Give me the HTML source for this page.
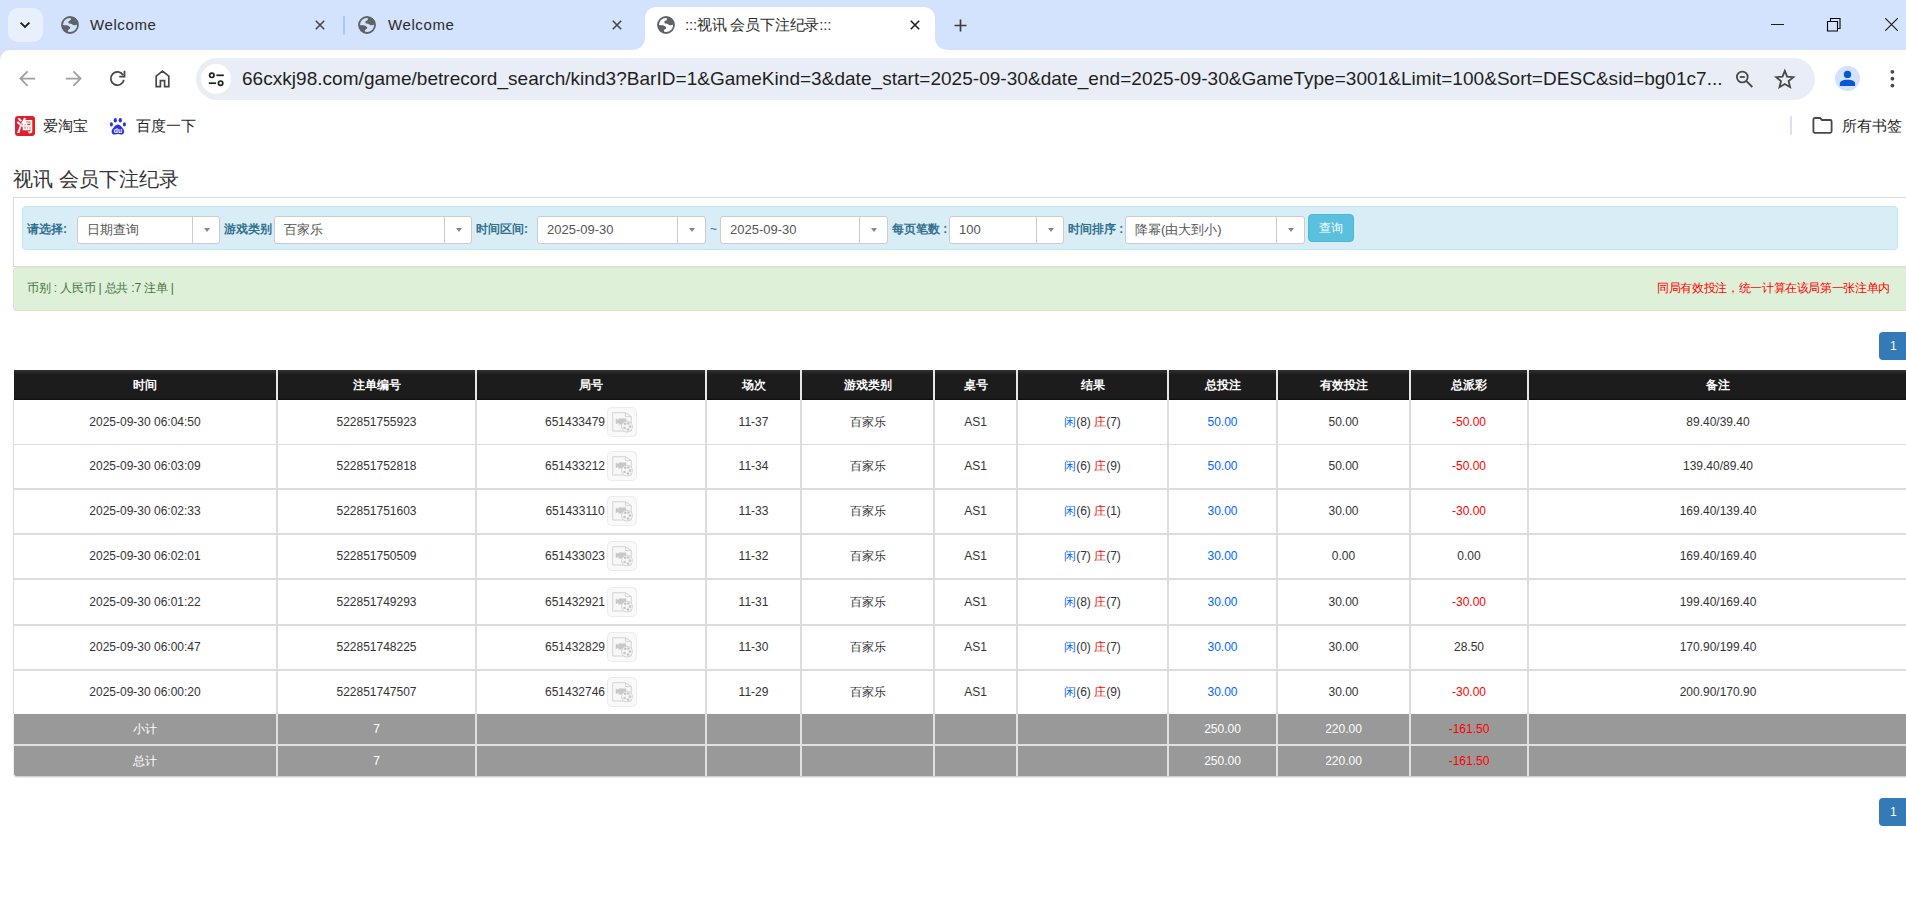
<!DOCTYPE html>
<html><head><meta charset="utf-8">
<style>
*{box-sizing:border-box}
html,body{margin:0;padding:0;width:1906px;height:900px;overflow:hidden;background:#fff;font-family:"Liberation Sans",sans-serif}
.abs{position:absolute}
/* chrome */
#tabstrip{position:absolute;left:0;top:0;width:1906px;height:62px;background:#d3e3fd}
#toolbar{position:absolute;left:0;top:50px;width:1906px;height:56px;background:#fff;border-top-left-radius:10px}
#bookbar{position:absolute;left:0;top:106px;width:1906px;height:40px;background:#fff}
.tabtitle{position:absolute;top:16px;font-size:15px;color:#2b2b2b;line-height:18px;white-space:nowrap}
#omni{position:absolute;left:196px;top:58px;width:1619px;height:42px;border-radius:21px;background:#e9eef6}
#url{position:absolute;left:242px;top:67px;font-size:19px;line-height:24px;color:#1f1f1f;white-space:nowrap;letter-spacing:0.034px}
.bk{top:117px;font-size:15px;line-height:18px;color:#1f1f1f;white-space:nowrap}
/* page */
#page{position:static}
.pg{left:1879px;width:40px;height:28px;border-radius:4px;background:#337ab7;color:#fff;font-size:12px;line-height:28px;padding-left:11px}
.sel{position:absolute;top:216px;height:28px;border:1px solid #ccc;border-radius:3px;background:#fff}
.st{position:absolute;left:9px;top:5px;font-size:13px;line-height:15px;color:#555;white-space:nowrap}
.sd{position:absolute;top:0;width:1px;height:26px;background:#ccc}
.sa{position:absolute;top:11px;width:0;height:0;border-left:3.5px solid transparent;border-right:3.5px solid transparent;border-top:4px solid #888}
.lbl{position:absolute;top:222px;font-size:12px;line-height:14px;font-weight:bold;color:#31708f;white-space:nowrap}
.btn{position:absolute;left:1308px;top:214px;width:46px;height:28px;border:1px solid #46b8da;border-radius:4px;background:#5bc0de;color:#fff;font-size:12px;line-height:26px;text-align:center}
.th{position:absolute;top:370px;height:30px;background:linear-gradient(#333 0,#222 3px,#1c1c1c 5px,#1c1c1c 28px,#0e0e0e 30px);color:#fff;font-weight:bold;font-size:12px;line-height:30px;text-align:center;white-space:nowrap}
.td{position:absolute;height:44px;font-size:12px;line-height:44px;color:#333;text-align:center;white-space:nowrap}
.tt{position:absolute;height:30px;font-size:12px;line-height:30px;color:#fff;text-align:center;white-space:nowrap}
.blue{color:#06f}.red{color:#f00}
.vid{display:inline-block;width:30px;height:30px;margin-left:2px;vertical-align:middle;line-height:0;position:relative;top:-1px}.vid svg{display:block}
</style></head><body>
<div id="tabstrip">
  <div class="abs" style="left:8px;top:8px;width:35px;height:34px;border-radius:10px;background:#e9f0fd"></div>
  <svg class="abs" style="left:19px;top:19px" width="12" height="12" viewBox="0 0 12 12"><path d="M1.6 3.6 L6 8 L10.4 3.6" fill="none" stroke="#1f1f1f" stroke-width="1.9"/></svg>
  <svg class="abs" style="left:61px;top:16px" width="18" height="18" viewBox="0 0 18 18"><circle cx="9" cy="9" r="8" fill="#d3e3fd" stroke="#5f6368" stroke-width="1.8"/><path d="M9.9 1 L9.8 3.9 C9.2 4.4 8 4.6 7.5 5.4 C7.1 6.3 7.4 7.3 8.3 7.6 C9.4 7.9 10.6 7.6 11.4 8.5 C12 9.1 12.6 9.4 13.3 9.3 C14.4 9.2 15.3 8.8 16.9 8.4 L17 5 L14 1.8 Z" fill="#5f6368"/><path d="M1 8.9 C2.5 9 4.5 9 5.6 9.3 C7 9.7 8.3 10.2 8.9 11 C9.4 11.8 9.2 12.6 8.4 13 C7.6 13.4 7 13.9 6.9 14.8 L7.2 17 L3.5 15.5 L1 12 Z" fill="#5f6368"/></svg>
  <div class="tabtitle" style="left:90px;letter-spacing:0.6px">Welcome</div>
  <svg class="abs" style="left:315px;top:20px" width="10" height="10" viewBox="0 0 10 10"><path d="M0.8 0.8L9.2 9.2M9.2 0.8L0.8 9.2" stroke="#474747" stroke-width="1.6"/></svg>
  <div class="abs" style="left:343px;top:16px;width:2px;height:19px;border-radius:1px;background:#a8c7fa"></div>
  <svg class="abs" style="left:358px;top:16px" width="18" height="18" viewBox="0 0 18 18"><circle cx="9" cy="9" r="8" fill="#d3e3fd" stroke="#5f6368" stroke-width="1.8"/><path d="M9.9 1 L9.8 3.9 C9.2 4.4 8 4.6 7.5 5.4 C7.1 6.3 7.4 7.3 8.3 7.6 C9.4 7.9 10.6 7.6 11.4 8.5 C12 9.1 12.6 9.4 13.3 9.3 C14.4 9.2 15.3 8.8 16.9 8.4 L17 5 L14 1.8 Z" fill="#5f6368"/><path d="M1 8.9 C2.5 9 4.5 9 5.6 9.3 C7 9.7 8.3 10.2 8.9 11 C9.4 11.8 9.2 12.6 8.4 13 C7.6 13.4 7 13.9 6.9 14.8 L7.2 17 L3.5 15.5 L1 12 Z" fill="#5f6368"/></svg>
  <div class="tabtitle" style="left:388px;letter-spacing:0.6px">Welcome</div>
  <svg class="abs" style="left:612px;top:20px" width="10" height="10" viewBox="0 0 10 10"><path d="M0.8 0.8L9.2 9.2M9.2 0.8L0.8 9.2" stroke="#474747" stroke-width="1.6"/></svg>
  <svg class="abs" style="left:631px;top:7px" width="318" height="43" viewBox="0 0 318 43"><path d="M0 43 C8 43 14 39 14 30 L14 12 C14 5 18 0 26 0 L292 0 C300 0 304 5 304 12 L304 30 C304 39 310 43 318 43 Z" fill="#fff"/></svg>
  <svg class="abs" style="left:657px;top:16px" width="18" height="18" viewBox="0 0 18 18"><circle cx="9" cy="9" r="8" fill="#fff" stroke="#5f6368" stroke-width="1.8"/><path d="M9.9 1 L9.8 3.9 C9.2 4.4 8 4.6 7.5 5.4 C7.1 6.3 7.4 7.3 8.3 7.6 C9.4 7.9 10.6 7.6 11.4 8.5 C12 9.1 12.6 9.4 13.3 9.3 C14.4 9.2 15.3 8.8 16.9 8.4 L17 5 L14 1.8 Z" fill="#5f6368"/><path d="M1 8.9 C2.5 9 4.5 9 5.6 9.3 C7 9.7 8.3 10.2 8.9 11 C9.4 11.8 9.2 12.6 8.4 13 C7.6 13.4 7 13.9 6.9 14.8 L7.2 17 L3.5 15.5 L1 12 Z" fill="#5f6368"/></svg>
  <div class="tabtitle" style="left:685px;letter-spacing:-0.2px">:::视讯 会员下注纪录:::</div>
  <svg class="abs" style="left:910px;top:20px" width="10" height="10" viewBox="0 0 10 10"><path d="M0.8 0.8L9.2 9.2M9.2 0.8L0.8 9.2" stroke="#1f1f1f" stroke-width="1.6"/></svg>
  <svg class="abs" style="left:954px;top:19px" width="13" height="13" viewBox="0 0 13 13"><path d="M6.5 0.5V12.5M0.5 6.5H12.5" stroke="#3c3c3c" stroke-width="1.7"/></svg>
  <div class="abs" style="left:1771px;top:24px;width:13px;height:1px;background:#1f1f1f"></div>
  <svg class="abs" style="left:1826px;top:17px" width="16" height="16" viewBox="0 0 16 16"><path d="M1.5 4.5H11.5V14H1.5Z M4.5 4.5V1.5H14V11.5H11.5" fill="none" stroke="#000" stroke-width="1.1"/></svg>
  <svg class="abs" style="left:1885px;top:18px" width="13" height="13" viewBox="0 0 13 13"><path d="M0.3 0.3L12.7 12.7M12.7 0.3L0.3 12.7" stroke="#1a1a1a" stroke-width="1.15"/></svg>
</div>
<div id="toolbar"></div>
<svg class="abs" style="left:18px;top:69px" width="20" height="20" viewBox="0 0 20 20"><path d="M17.2 9.6H2.6 M9.6 2.4 L2.4 9.6 L9.6 16.8" fill="none" stroke="#a0a0a0" stroke-width="1.8"/></svg>
<svg class="abs" style="left:63px;top:69px" width="20" height="20" viewBox="0 0 20 20"><path d="M2.8 9.6H17.4 M10.4 2.4 L17.6 9.6 L10.4 16.8" fill="none" stroke="#a0a0a0" stroke-width="1.8"/></svg>
<svg class="abs" style="left:107px;top:69px" width="20" height="20" viewBox="0 0 20 20"><path d="M16.9 10.85 A6.6 6.6 0 1 1 16.2 6.3" fill="none" stroke="#474747" stroke-width="1.8"/><path d="M17.5 1.8 V7.7 H12.2" fill="none" stroke="#474747" stroke-width="1.8"/></svg>
<svg class="abs" style="left:152px;top:68px" width="20" height="22" viewBox="0 0 20 22"><path d="M4.2 18.6 V8.2 L10.5 3.2 L16.8 8.2 V18.6 H12.6 V12.6 H8.4 V18.6 Z" fill="none" stroke="#474747" stroke-width="1.7" stroke-linejoin="miter"/></svg>
<div id="omni"></div>
<div class="abs" style="left:201px;top:64px;width:30px;height:30px;border-radius:15px;background:#fff"></div>
<svg class="abs" style="left:206px;top:69px" width="20" height="20" viewBox="0 0 20 20"><circle cx="5.8" cy="6.3" r="2.2" fill="none" stroke="#1f1f1f" stroke-width="1.7"/><path d="M10.4 6.3H17.8" stroke="#1f1f1f" stroke-width="1.7"/><circle cx="14.6" cy="14.2" r="2.2" fill="none" stroke="#1f1f1f" stroke-width="1.7"/><path d="M2.8 14.2H10.1" stroke="#1f1f1f" stroke-width="1.7"/></svg>
<div id="url">66cxkj98.com/game/betrecord_search/kind3?BarID=1&amp;GameKind=3&amp;date_start=2025-09-30&amp;date_end=2025-09-30&amp;GameType=3001&amp;Limit=100&amp;Sort=DESC&amp;sid=bg01c7...</div>
<svg class="abs" style="left:1732px;top:67px" width="24" height="24" viewBox="0 0 24 24"><circle cx="10.3" cy="10" r="5.4" fill="none" stroke="#474747" stroke-width="1.8"/><path d="M7.8 10H12.8" stroke="#474747" stroke-width="1.8"/><path d="M14.2 13.9 L20.3 20" stroke="#474747" stroke-width="1.9"/></svg>
<svg class="abs" style="left:1773px;top:67px" width="24" height="24" viewBox="0 0 24 24"><path d="M11.8 3.9 L14.1 9.6 L20.4 10.1 L15.6 14.1 L17.1 20.2 L11.8 17 L6.5 20.2 L8 14.1 L3.2 10.1 L9.5 9.6 Z" fill="none" stroke="#474747" stroke-width="1.8" stroke-linejoin="miter"/></svg>
<div class="abs" style="left:1835px;top:66px;width:25px;height:25px;border-radius:50%;background:#d3e3fd"></div>
<svg class="abs" style="left:1835px;top:66px" width="25" height="25" viewBox="0 0 25 25"><circle cx="12.5" cy="8.4" r="3.7" fill="#0b57d0"/><path d="M4.8 19.9 V17.6 C4.8 15.2 8 13.8 12.5 13.8 C17 13.8 20.1 15.2 20.1 17.6 V19.9 Z" fill="#0b57d0"/></svg>
<svg class="abs" style="left:1888px;top:68px" width="8" height="22" viewBox="0 0 8 22"><circle cx="4.4" cy="3.8" r="1.9" fill="#474747"/><circle cx="4.4" cy="10.7" r="1.9" fill="#474747"/><circle cx="4.4" cy="17.6" r="1.9" fill="#474747"/></svg>
<div id="bookbar"></div>
<div class="abs" style="left:15px;top:116px;width:20px;height:20px;border-radius:3px;background:#df1f2b;color:#fff;font-size:16px;line-height:20px;text-align:center;font-weight:bold">淘</div>
<div class="abs bk" style="left:43px">爱淘宝</div>
<svg class="abs" style="left:109px;top:117px" width="18" height="18" viewBox="0 0 18 18"><ellipse cx="6.3" cy="3.2" rx="1.6" ry="2.3" fill="#2932e1"/><ellipse cx="11.3" cy="3.2" rx="1.6" ry="2.3" fill="#2932e1"/><ellipse cx="2.4" cy="7.4" rx="1.5" ry="2.1" fill="#2932e1"/><ellipse cx="15.4" cy="7.4" rx="1.5" ry="2.1" fill="#2932e1"/><path d="M8.9 7.6 C6.4 7.6 5.2 10.2 3.4 12.2 C1.9 14 2.6 17.6 5.5 17.6 C6.9 17.6 7.7 17.1 8.9 17.1 C10.1 17.1 10.9 17.6 12.3 17.6 C15.2 17.6 15.9 14 14.4 12.2 C12.6 10.2 11.4 7.6 8.9 7.6 Z" fill="#2932e1"/><text x="8.9" y="15.9" font-size="6.8" font-family="Liberation Sans" font-weight="bold" fill="#fff" text-anchor="middle">du</text></svg>
<div class="abs bk" style="left:136px">百度一下</div>
<div class="abs" style="left:1790px;top:116px;width:2px;height:19px;background:#d3e3fd;border-radius:1px"></div>
<svg class="abs" style="left:1810px;top:115px" width="24" height="20" viewBox="0 0 24 20"><path d="M3.4 4.5 C3.4 3.6 4 3 4.9 3 H10 L12 5 H20.1 C21 5 21.6 5.6 21.6 6.5 V16.3 C21.6 17.2 21 17.8 20.1 17.8 H4.9 C4 17.8 3.4 17.2 3.4 16.3 Z" fill="none" stroke="#474747" stroke-width="1.8"/></svg>
<div class="abs bk" style="left:1842px">所有书签</div>
<div id="page">
<div class="abs" style="left:13px;top:166px;font-size:20px;line-height:26px;color:#333;white-space:nowrap">视讯 会员下注纪录</div>
<div class="abs" style="left:13px;top:197px;width:1900px;height:70px;border:1px solid #ddd;border-right:none;background:#fff"></div>
<div class="abs" style="left:22px;top:206px;width:1876px;height:44px;border:1px solid #bce8f1;border-radius:4px;background:#d9edf7"></div>
<div id="filters"><div class="sel" style="left:77px;width:143px"><span class="st">日期查询</span><div class="sd" style="left:114px"></div><div class="sa" style="left:126px"></div></div>
<div class="sel" style="left:274px;width:198px"><span class="st">百家乐</span><div class="sd" style="left:169px"></div><div class="sa" style="left:181px"></div></div>
<div class="sel" style="left:537px;width:169px"><span class="st">2025-09-30</span><div class="sd" style="left:139px"></div><div class="sa" style="left:151px"></div></div>
<div class="sel" style="left:720px;width:168px"><span class="st">2025-09-30</span><div class="sd" style="left:138px"></div><div class="sa" style="left:150px"></div></div>
<div class="sel" style="left:949px;width:115px"><span class="st">100</span><div class="sd" style="left:86px"></div><div class="sa" style="left:98px"></div></div>
<div class="sel" style="left:1125px;width:180px"><span class="st">降幂(由大到小)</span><div class="sd" style="left:150px"></div><div class="sa" style="left:162px"></div></div>
<div class="lbl" style="left:27px">请选择:</div>
<div class="lbl" style="left:224px">游戏类别</div>
<div class="lbl" style="left:476px">时间区间:</div>
<div class="lbl" style="left:892px">每页笔数 :</div>
<div class="lbl" style="left:1068px">时间排序 :</div>
<div class="lbl" style="left:710px;font-weight:normal">~</div>
<div class="btn">查询</div></div>
<div class="abs" style="left:13px;top:267px;width:1900px;height:44px;border:1px solid #d6e9c6;border-right:none;border-radius:4px 0 0 4px;background:#dff0d8"></div>
<div class="abs" style="left:27px;top:281px;font-size:12px;line-height:14px;color:#3c763d;white-space:nowrap;letter-spacing:-0.2px">币别 : 人民币 | 总共 :7 注单 |</div>
<div class="abs" style="left:1657px;top:281px;font-size:12px;line-height:14px;color:#f00;white-space:nowrap;letter-spacing:-0.35px">同局有效投注，统一计算在该局第一张注单内</div>
<div class="abs pg" style="top:332px">1</div>
<div id="tbl"><div class="th" style="left:14px;width:262px">时间</div>
<div class="th" style="left:278px;width:197px">注单编号</div>
<div class="th" style="left:477px;width:228px">局号</div>
<div class="th" style="left:707px;width:93px">场次</div>
<div class="th" style="left:802px;width:131px">游戏类别</div>
<div class="th" style="left:935px;width:81px">桌号</div>
<div class="th" style="left:1018px;width:149px">结果</div>
<div class="th" style="left:1169px;width:107px">总投注</div>
<div class="th" style="left:1278px;width:131px">有效投注</div>
<div class="th" style="left:1411px;width:116px">总派彩</div>
<div class="th" style="left:1529px;width:378px">备注</div>
<div class="abs" style="left:13px;top:400px;width:1px;height:314px;background:#ddd"></div>
<div class="abs" style="left:14px;top:444px;width:1892px;height:1px;background:#ddd"></div>
<div class="abs" style="left:14px;top:488px;width:1892px;height:2px;background:#ddd"></div>
<div class="abs" style="left:14px;top:533px;width:1892px;height:2px;background:#ddd"></div>
<div class="abs" style="left:14px;top:578px;width:1892px;height:2px;background:#ddd"></div>
<div class="abs" style="left:14px;top:624px;width:1892px;height:2px;background:#ddd"></div>
<div class="abs" style="left:14px;top:669px;width:1892px;height:2px;background:#ddd"></div>
<div class="abs" style="left:276px;top:400px;width:2px;height:314px;background:#ddd"></div>
<div class="abs" style="left:276px;top:370px;width:2px;height:30px;background:#e6e6e6"></div>
<div class="abs" style="left:475px;top:400px;width:2px;height:314px;background:#ddd"></div>
<div class="abs" style="left:475px;top:370px;width:2px;height:30px;background:#e6e6e6"></div>
<div class="abs" style="left:705px;top:400px;width:2px;height:314px;background:#ddd"></div>
<div class="abs" style="left:705px;top:370px;width:2px;height:30px;background:#e6e6e6"></div>
<div class="abs" style="left:800px;top:400px;width:2px;height:314px;background:#ddd"></div>
<div class="abs" style="left:800px;top:370px;width:2px;height:30px;background:#e6e6e6"></div>
<div class="abs" style="left:933px;top:400px;width:2px;height:314px;background:#ddd"></div>
<div class="abs" style="left:933px;top:370px;width:2px;height:30px;background:#e6e6e6"></div>
<div class="abs" style="left:1016px;top:400px;width:2px;height:314px;background:#ddd"></div>
<div class="abs" style="left:1016px;top:370px;width:2px;height:30px;background:#e6e6e6"></div>
<div class="abs" style="left:1167px;top:400px;width:2px;height:314px;background:#ddd"></div>
<div class="abs" style="left:1167px;top:370px;width:2px;height:30px;background:#e6e6e6"></div>
<div class="abs" style="left:1276px;top:400px;width:2px;height:314px;background:#ddd"></div>
<div class="abs" style="left:1276px;top:370px;width:2px;height:30px;background:#e6e6e6"></div>
<div class="abs" style="left:1409px;top:400px;width:2px;height:314px;background:#ddd"></div>
<div class="abs" style="left:1409px;top:370px;width:2px;height:30px;background:#e6e6e6"></div>
<div class="abs" style="left:1527px;top:400px;width:2px;height:314px;background:#ddd"></div>
<div class="abs" style="left:1527px;top:370px;width:2px;height:30px;background:#e6e6e6"></div>
<div class="td" style="left:14px;top:400px;width:262px">2025-09-30 06:04:50</div>
<div class="td" style="left:278px;top:400px;width:197px">522851755923</div>
<div class="td" style="left:477px;top:400px;width:228px">651433479<span class="vid"><svg width="30" height="30" viewBox="0 0 30 30"><rect x="0.5" y="0.5" width="29" height="29" rx="4" fill="#f9f9f9" stroke="#ececec"/><path d="M5.7 5.7 H18.4 L24.3 9.6 V24 H5.7 Z" fill="#f7f7f7" stroke="#d4d4d4" stroke-width="1"/><path d="M18.4 5.7 V9.6 H24.3" fill="none" stroke="#d4d4d4" stroke-width="1"/><path d="M8.8 11.6 L11.4 13 V11.4 H19.2 V17.4 H11.4 V15.8 L8.8 17.2 Z" fill="#c8c8c8"/><circle cx="20" cy="19.6" r="5.4" fill="#f7f7f7" stroke="#d0d0d0" stroke-width="0.9"/><circle cx="18.2" cy="16.8" r="1.35" fill="#c6c6c6"/><circle cx="21.4" cy="16.5" r="1.35" fill="#c6c6c6"/><circle cx="23" cy="19.6" r="1.35" fill="#c6c6c6"/><circle cx="21" cy="22.6" r="1.35" fill="#c6c6c6"/><circle cx="17.6" cy="21" r="1.35" fill="#c6c6c6"/></svg></span></div>
<div class="td" style="left:707px;top:400px;width:93px">11-37</div>
<div class="td" style="left:802px;top:400px;width:131px">百家乐</div>
<div class="td" style="left:935px;top:400px;width:81px">AS1</div>
<div class="td" style="left:1018px;top:400px;width:149px"><span class="blue">闲</span>(8) <span class="red">庄</span>(7)</div>
<div class="td" style="left:1169px;top:400px;width:107px"><span class="blue">50.00</span></div>
<div class="td" style="left:1278px;top:400px;width:131px">50.00</div>
<div class="td" style="left:1411px;top:400px;width:116px"><span class="red">-50.00</span></div>
<div class="td" style="left:1529px;top:400px;width:378px">89.40/39.40</div>
<div class="td" style="left:14px;top:444px;width:262px">2025-09-30 06:03:09</div>
<div class="td" style="left:278px;top:444px;width:197px">522851752818</div>
<div class="td" style="left:477px;top:444px;width:228px">651433212<span class="vid"><svg width="30" height="30" viewBox="0 0 30 30"><rect x="0.5" y="0.5" width="29" height="29" rx="4" fill="#f9f9f9" stroke="#ececec"/><path d="M5.7 5.7 H18.4 L24.3 9.6 V24 H5.7 Z" fill="#f7f7f7" stroke="#d4d4d4" stroke-width="1"/><path d="M18.4 5.7 V9.6 H24.3" fill="none" stroke="#d4d4d4" stroke-width="1"/><path d="M8.8 11.6 L11.4 13 V11.4 H19.2 V17.4 H11.4 V15.8 L8.8 17.2 Z" fill="#c8c8c8"/><circle cx="20" cy="19.6" r="5.4" fill="#f7f7f7" stroke="#d0d0d0" stroke-width="0.9"/><circle cx="18.2" cy="16.8" r="1.35" fill="#c6c6c6"/><circle cx="21.4" cy="16.5" r="1.35" fill="#c6c6c6"/><circle cx="23" cy="19.6" r="1.35" fill="#c6c6c6"/><circle cx="21" cy="22.6" r="1.35" fill="#c6c6c6"/><circle cx="17.6" cy="21" r="1.35" fill="#c6c6c6"/></svg></span></div>
<div class="td" style="left:707px;top:444px;width:93px">11-34</div>
<div class="td" style="left:802px;top:444px;width:131px">百家乐</div>
<div class="td" style="left:935px;top:444px;width:81px">AS1</div>
<div class="td" style="left:1018px;top:444px;width:149px"><span class="blue">闲</span>(6) <span class="red">庄</span>(9)</div>
<div class="td" style="left:1169px;top:444px;width:107px"><span class="blue">50.00</span></div>
<div class="td" style="left:1278px;top:444px;width:131px">50.00</div>
<div class="td" style="left:1411px;top:444px;width:116px"><span class="red">-50.00</span></div>
<div class="td" style="left:1529px;top:444px;width:378px">139.40/89.40</div>
<div class="td" style="left:14px;top:489px;width:262px">2025-09-30 06:02:33</div>
<div class="td" style="left:278px;top:489px;width:197px">522851751603</div>
<div class="td" style="left:477px;top:489px;width:228px">651433110<span class="vid"><svg width="30" height="30" viewBox="0 0 30 30"><rect x="0.5" y="0.5" width="29" height="29" rx="4" fill="#f9f9f9" stroke="#ececec"/><path d="M5.7 5.7 H18.4 L24.3 9.6 V24 H5.7 Z" fill="#f7f7f7" stroke="#d4d4d4" stroke-width="1"/><path d="M18.4 5.7 V9.6 H24.3" fill="none" stroke="#d4d4d4" stroke-width="1"/><path d="M8.8 11.6 L11.4 13 V11.4 H19.2 V17.4 H11.4 V15.8 L8.8 17.2 Z" fill="#c8c8c8"/><circle cx="20" cy="19.6" r="5.4" fill="#f7f7f7" stroke="#d0d0d0" stroke-width="0.9"/><circle cx="18.2" cy="16.8" r="1.35" fill="#c6c6c6"/><circle cx="21.4" cy="16.5" r="1.35" fill="#c6c6c6"/><circle cx="23" cy="19.6" r="1.35" fill="#c6c6c6"/><circle cx="21" cy="22.6" r="1.35" fill="#c6c6c6"/><circle cx="17.6" cy="21" r="1.35" fill="#c6c6c6"/></svg></span></div>
<div class="td" style="left:707px;top:489px;width:93px">11-33</div>
<div class="td" style="left:802px;top:489px;width:131px">百家乐</div>
<div class="td" style="left:935px;top:489px;width:81px">AS1</div>
<div class="td" style="left:1018px;top:489px;width:149px"><span class="blue">闲</span>(6) <span class="red">庄</span>(1)</div>
<div class="td" style="left:1169px;top:489px;width:107px"><span class="blue">30.00</span></div>
<div class="td" style="left:1278px;top:489px;width:131px">30.00</div>
<div class="td" style="left:1411px;top:489px;width:116px"><span class="red">-30.00</span></div>
<div class="td" style="left:1529px;top:489px;width:378px">169.40/139.40</div>
<div class="td" style="left:14px;top:534px;width:262px">2025-09-30 06:02:01</div>
<div class="td" style="left:278px;top:534px;width:197px">522851750509</div>
<div class="td" style="left:477px;top:534px;width:228px">651433023<span class="vid"><svg width="30" height="30" viewBox="0 0 30 30"><rect x="0.5" y="0.5" width="29" height="29" rx="4" fill="#f9f9f9" stroke="#ececec"/><path d="M5.7 5.7 H18.4 L24.3 9.6 V24 H5.7 Z" fill="#f7f7f7" stroke="#d4d4d4" stroke-width="1"/><path d="M18.4 5.7 V9.6 H24.3" fill="none" stroke="#d4d4d4" stroke-width="1"/><path d="M8.8 11.6 L11.4 13 V11.4 H19.2 V17.4 H11.4 V15.8 L8.8 17.2 Z" fill="#c8c8c8"/><circle cx="20" cy="19.6" r="5.4" fill="#f7f7f7" stroke="#d0d0d0" stroke-width="0.9"/><circle cx="18.2" cy="16.8" r="1.35" fill="#c6c6c6"/><circle cx="21.4" cy="16.5" r="1.35" fill="#c6c6c6"/><circle cx="23" cy="19.6" r="1.35" fill="#c6c6c6"/><circle cx="21" cy="22.6" r="1.35" fill="#c6c6c6"/><circle cx="17.6" cy="21" r="1.35" fill="#c6c6c6"/></svg></span></div>
<div class="td" style="left:707px;top:534px;width:93px">11-32</div>
<div class="td" style="left:802px;top:534px;width:131px">百家乐</div>
<div class="td" style="left:935px;top:534px;width:81px">AS1</div>
<div class="td" style="left:1018px;top:534px;width:149px"><span class="blue">闲</span>(7) <span class="red">庄</span>(7)</div>
<div class="td" style="left:1169px;top:534px;width:107px"><span class="blue">30.00</span></div>
<div class="td" style="left:1278px;top:534px;width:131px">0.00</div>
<div class="td" style="left:1411px;top:534px;width:116px"><span class="">0.00</span></div>
<div class="td" style="left:1529px;top:534px;width:378px">169.40/169.40</div>
<div class="td" style="left:14px;top:580px;width:262px">2025-09-30 06:01:22</div>
<div class="td" style="left:278px;top:580px;width:197px">522851749293</div>
<div class="td" style="left:477px;top:580px;width:228px">651432921<span class="vid"><svg width="30" height="30" viewBox="0 0 30 30"><rect x="0.5" y="0.5" width="29" height="29" rx="4" fill="#f9f9f9" stroke="#ececec"/><path d="M5.7 5.7 H18.4 L24.3 9.6 V24 H5.7 Z" fill="#f7f7f7" stroke="#d4d4d4" stroke-width="1"/><path d="M18.4 5.7 V9.6 H24.3" fill="none" stroke="#d4d4d4" stroke-width="1"/><path d="M8.8 11.6 L11.4 13 V11.4 H19.2 V17.4 H11.4 V15.8 L8.8 17.2 Z" fill="#c8c8c8"/><circle cx="20" cy="19.6" r="5.4" fill="#f7f7f7" stroke="#d0d0d0" stroke-width="0.9"/><circle cx="18.2" cy="16.8" r="1.35" fill="#c6c6c6"/><circle cx="21.4" cy="16.5" r="1.35" fill="#c6c6c6"/><circle cx="23" cy="19.6" r="1.35" fill="#c6c6c6"/><circle cx="21" cy="22.6" r="1.35" fill="#c6c6c6"/><circle cx="17.6" cy="21" r="1.35" fill="#c6c6c6"/></svg></span></div>
<div class="td" style="left:707px;top:580px;width:93px">11-31</div>
<div class="td" style="left:802px;top:580px;width:131px">百家乐</div>
<div class="td" style="left:935px;top:580px;width:81px">AS1</div>
<div class="td" style="left:1018px;top:580px;width:149px"><span class="blue">闲</span>(8) <span class="red">庄</span>(7)</div>
<div class="td" style="left:1169px;top:580px;width:107px"><span class="blue">30.00</span></div>
<div class="td" style="left:1278px;top:580px;width:131px">30.00</div>
<div class="td" style="left:1411px;top:580px;width:116px"><span class="red">-30.00</span></div>
<div class="td" style="left:1529px;top:580px;width:378px">199.40/169.40</div>
<div class="td" style="left:14px;top:625px;width:262px">2025-09-30 06:00:47</div>
<div class="td" style="left:278px;top:625px;width:197px">522851748225</div>
<div class="td" style="left:477px;top:625px;width:228px">651432829<span class="vid"><svg width="30" height="30" viewBox="0 0 30 30"><rect x="0.5" y="0.5" width="29" height="29" rx="4" fill="#f9f9f9" stroke="#ececec"/><path d="M5.7 5.7 H18.4 L24.3 9.6 V24 H5.7 Z" fill="#f7f7f7" stroke="#d4d4d4" stroke-width="1"/><path d="M18.4 5.7 V9.6 H24.3" fill="none" stroke="#d4d4d4" stroke-width="1"/><path d="M8.8 11.6 L11.4 13 V11.4 H19.2 V17.4 H11.4 V15.8 L8.8 17.2 Z" fill="#c8c8c8"/><circle cx="20" cy="19.6" r="5.4" fill="#f7f7f7" stroke="#d0d0d0" stroke-width="0.9"/><circle cx="18.2" cy="16.8" r="1.35" fill="#c6c6c6"/><circle cx="21.4" cy="16.5" r="1.35" fill="#c6c6c6"/><circle cx="23" cy="19.6" r="1.35" fill="#c6c6c6"/><circle cx="21" cy="22.6" r="1.35" fill="#c6c6c6"/><circle cx="17.6" cy="21" r="1.35" fill="#c6c6c6"/></svg></span></div>
<div class="td" style="left:707px;top:625px;width:93px">11-30</div>
<div class="td" style="left:802px;top:625px;width:131px">百家乐</div>
<div class="td" style="left:935px;top:625px;width:81px">AS1</div>
<div class="td" style="left:1018px;top:625px;width:149px"><span class="blue">闲</span>(0) <span class="red">庄</span>(7)</div>
<div class="td" style="left:1169px;top:625px;width:107px"><span class="blue">30.00</span></div>
<div class="td" style="left:1278px;top:625px;width:131px">30.00</div>
<div class="td" style="left:1411px;top:625px;width:116px"><span class="">28.50</span></div>
<div class="td" style="left:1529px;top:625px;width:378px">170.90/199.40</div>
<div class="td" style="left:14px;top:670px;width:262px">2025-09-30 06:00:20</div>
<div class="td" style="left:278px;top:670px;width:197px">522851747507</div>
<div class="td" style="left:477px;top:670px;width:228px">651432746<span class="vid"><svg width="30" height="30" viewBox="0 0 30 30"><rect x="0.5" y="0.5" width="29" height="29" rx="4" fill="#f9f9f9" stroke="#ececec"/><path d="M5.7 5.7 H18.4 L24.3 9.6 V24 H5.7 Z" fill="#f7f7f7" stroke="#d4d4d4" stroke-width="1"/><path d="M18.4 5.7 V9.6 H24.3" fill="none" stroke="#d4d4d4" stroke-width="1"/><path d="M8.8 11.6 L11.4 13 V11.4 H19.2 V17.4 H11.4 V15.8 L8.8 17.2 Z" fill="#c8c8c8"/><circle cx="20" cy="19.6" r="5.4" fill="#f7f7f7" stroke="#d0d0d0" stroke-width="0.9"/><circle cx="18.2" cy="16.8" r="1.35" fill="#c6c6c6"/><circle cx="21.4" cy="16.5" r="1.35" fill="#c6c6c6"/><circle cx="23" cy="19.6" r="1.35" fill="#c6c6c6"/><circle cx="21" cy="22.6" r="1.35" fill="#c6c6c6"/><circle cx="17.6" cy="21" r="1.35" fill="#c6c6c6"/></svg></span></div>
<div class="td" style="left:707px;top:670px;width:93px">11-29</div>
<div class="td" style="left:802px;top:670px;width:131px">百家乐</div>
<div class="td" style="left:935px;top:670px;width:81px">AS1</div>
<div class="td" style="left:1018px;top:670px;width:149px"><span class="blue">闲</span>(6) <span class="red">庄</span>(9)</div>
<div class="td" style="left:1169px;top:670px;width:107px"><span class="blue">30.00</span></div>
<div class="td" style="left:1278px;top:670px;width:131px">30.00</div>
<div class="td" style="left:1411px;top:670px;width:116px"><span class="red">-30.00</span></div>
<div class="td" style="left:1529px;top:670px;width:378px">200.90/170.90</div>
<div class="abs" style="left:14px;top:714px;width:1900px;height:62px;background:#999;border-bottom-left-radius:3px;box-shadow:0 1px 2px rgba(0,0,0,0.25)"></div>
<div class="tt" style="left:14px;top:714px;width:262px">小计</div>
<div class="tt" style="left:278px;top:714px;width:197px">7</div>
<div class="tt" style="left:477px;top:714px;width:228px"></div>
<div class="tt" style="left:707px;top:714px;width:93px"></div>
<div class="tt" style="left:802px;top:714px;width:131px"></div>
<div class="tt" style="left:935px;top:714px;width:81px"></div>
<div class="tt" style="left:1018px;top:714px;width:149px"></div>
<div class="tt" style="left:1169px;top:714px;width:107px">250.00</div>
<div class="tt" style="left:1278px;top:714px;width:131px">220.00</div>
<div class="tt" style="left:1411px;top:714px;width:116px"><span class="red">-161.50</span></div>
<div class="tt" style="left:1529px;top:714px;width:378px"></div>
<div class="tt" style="left:14px;top:746px;width:262px">总计</div>
<div class="tt" style="left:278px;top:746px;width:197px">7</div>
<div class="tt" style="left:477px;top:746px;width:228px"></div>
<div class="tt" style="left:707px;top:746px;width:93px"></div>
<div class="tt" style="left:802px;top:746px;width:131px"></div>
<div class="tt" style="left:935px;top:746px;width:81px"></div>
<div class="tt" style="left:1018px;top:746px;width:149px"></div>
<div class="tt" style="left:1169px;top:746px;width:107px">250.00</div>
<div class="tt" style="left:1278px;top:746px;width:131px">220.00</div>
<div class="tt" style="left:1411px;top:746px;width:116px"><span class="red">-161.50</span></div>
<div class="tt" style="left:1529px;top:746px;width:378px"></div>
<div class="abs" style="left:14px;top:744px;width:1892px;height:2px;background:#e0e0e0"></div>
<div class="abs" style="left:276px;top:714px;width:2px;height:62px;background:#e0e0e0"></div>
<div class="abs" style="left:475px;top:714px;width:2px;height:62px;background:#e0e0e0"></div>
<div class="abs" style="left:705px;top:714px;width:2px;height:62px;background:#e0e0e0"></div>
<div class="abs" style="left:800px;top:714px;width:2px;height:62px;background:#e0e0e0"></div>
<div class="abs" style="left:933px;top:714px;width:2px;height:62px;background:#e0e0e0"></div>
<div class="abs" style="left:1016px;top:714px;width:2px;height:62px;background:#e0e0e0"></div>
<div class="abs" style="left:1167px;top:714px;width:2px;height:62px;background:#e0e0e0"></div>
<div class="abs" style="left:1276px;top:714px;width:2px;height:62px;background:#e0e0e0"></div>
<div class="abs" style="left:1409px;top:714px;width:2px;height:62px;background:#e0e0e0"></div>
<div class="abs" style="left:1527px;top:714px;width:2px;height:62px;background:#e0e0e0"></div></div>
<div class="abs pg" style="top:798px">1</div>
</div>
</body></html>
